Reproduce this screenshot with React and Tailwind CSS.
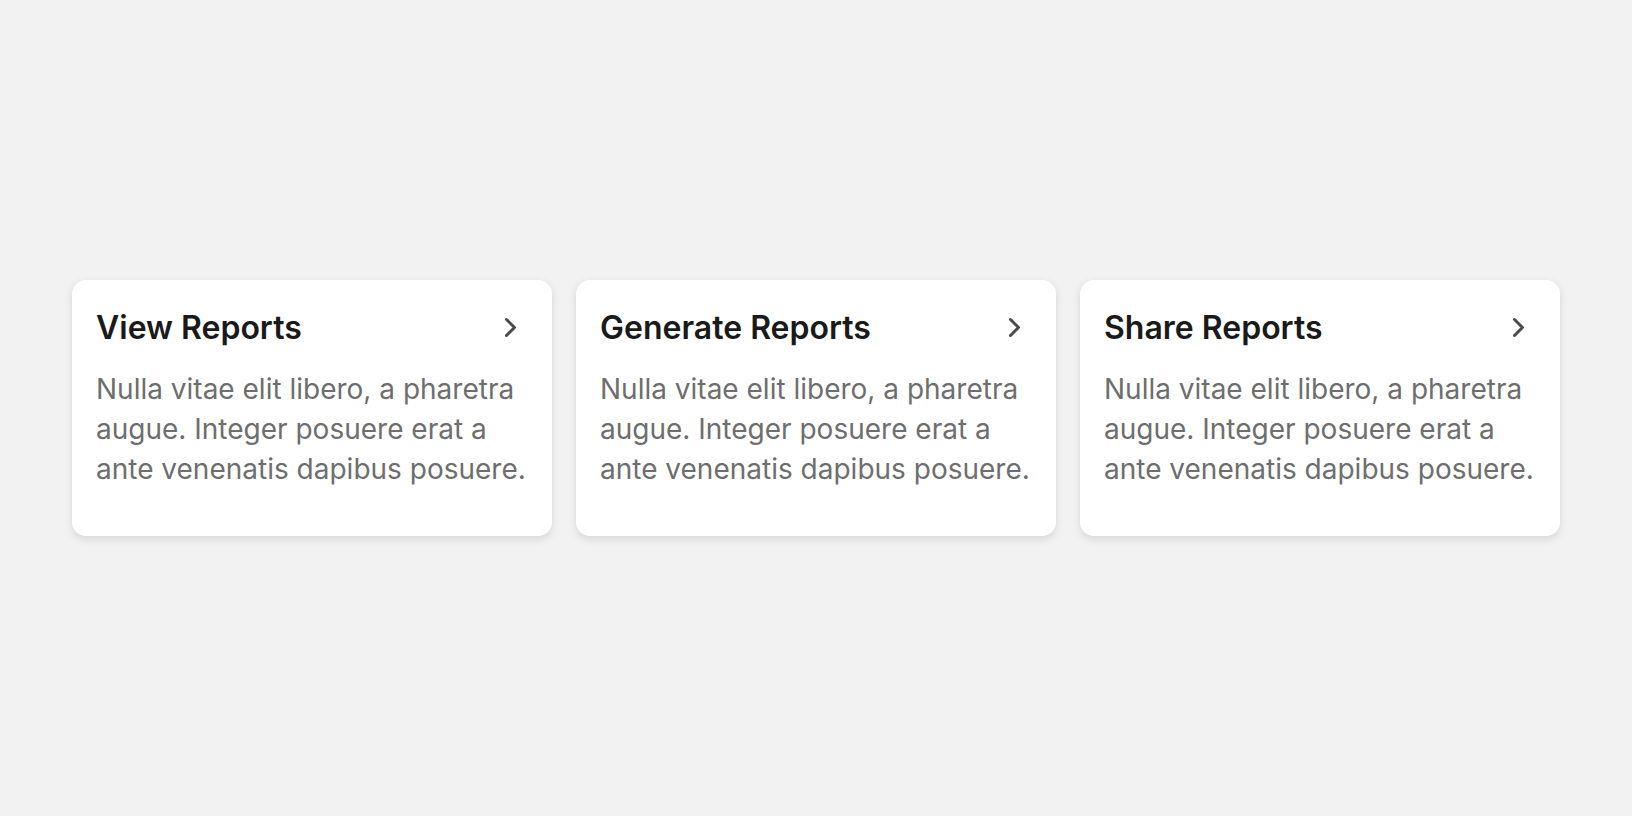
import React from "react";

const cards = ["View Reports", "Generate Reports", "Share Reports"];

function Chevron() {
  return (
    <svg width="24" height="24" viewBox="0 0 24 24" fill="none" className="shrink-0">
      <path d="M8.5 3.5 L16.5 11.5 L8.5 19.5" stroke="#4a4a4a" strokeWidth="3" strokeLinecap="round" strokeLinejoin="round" />
    </svg>
  );
}

export default function App() {
  return (
    <div
      className="w-full h-[816px] bg-[#f2f2f2] flex items-center justify-center gap-6"
      style={{ fontFamily: "Inter, 'Noto Sans', sans-serif" }}
    >
      {cards.map((t) => (
        <div
          key={t}
          className="w-[480px] h-[256px] bg-white rounded-[14px] shadow-[0_3px_8px_rgba(0,0,0,0.12)] pt-[28px] px-6"
        >
          <div className="flex items-center justify-between">
            <h2 className="text-[32px] leading-[40px] font-semibold text-[#1a1a1a]">{t}</h2>
            <div className="mr-[6px]"><Chevron /></div>
          </div>
          <p className="mt-[21px] text-[28px] leading-[40px] text-[#6e6e6e]">
            Nulla vitae elit libero, a pharetra augue. Integer posuere erat a ante venenatis dapibus posuere.
          </p>
        </div>
      ))}
    </div>
  );
}
